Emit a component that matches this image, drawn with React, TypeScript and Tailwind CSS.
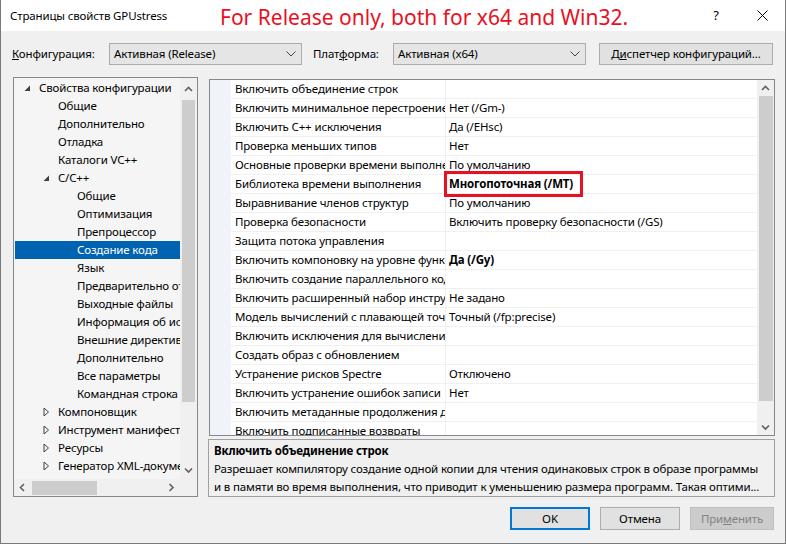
import React from "react";

const font = "font-['Segoe_UI','Noto_Sans',sans-serif]";

function Chevron({ dir, className }: { dir: "up" | "down" | "left" | "right"; className?: string }) {
  const d =
    dir === "up"
      ? "M1 5 L4.5 1.5 L8 5"
      : dir === "down"
      ? "M1 1.5 L4.5 5 L8 1.5"
      : dir === "left"
      ? "M5 1 L1.5 4.5 L5 8"
      : "M1.5 1 L5 4.5 L1.5 8";
  const w = dir === "up" || dir === "down" ? 9 : 7;
  const h = dir === "up" || dir === "down" ? 7 : 9;
  return (
    <svg width={w} height={h} viewBox={`0 0 ${w} ${h}`} className={className}>
      <path d={d} fill="none" stroke="#606060" strokeWidth="1.6" />
    </svg>
  );
}

function ComboChevron() {
  return (
    <svg width="10" height="6" viewBox="0 0 10 6">
      <path d="M0.5 0.5 L5 5 L9.5 0.5" fill="none" stroke="#444" strokeWidth="1" />
    </svg>
  );
}

type TreeItem = { t: string; lvl: number; state?: "exp" | "col"; sel?: boolean };

const tree: TreeItem[] = [
  { t: "Свойства конфигурации", lvl: 0, state: "exp" },
  { t: "Общие", lvl: 1 },
  { t: "Дополнительно", lvl: 1 },
  { t: "Отладка", lvl: 1 },
  { t: "Каталоги VC++", lvl: 1 },
  { t: "C/C++", lvl: 1, state: "exp" },
  { t: "Общие", lvl: 2 },
  { t: "Оптимизация", lvl: 2 },
  { t: "Препроцессор", lvl: 2 },
  { t: "Создание кода", lvl: 2, sel: true },
  { t: "Язык", lvl: 2 },
  { t: "Предварительно откомпилированные заголовки", lvl: 2 },
  { t: "Выходные файлы", lvl: 2 },
  { t: "Информация об исходных файлах", lvl: 2 },
  { t: "Внешние директивы include", lvl: 2 },
  { t: "Дополнительно", lvl: 2 },
  { t: "Все параметры", lvl: 2 },
  { t: "Командная строка", lvl: 2 },
  { t: "Компоновщик", lvl: 1, state: "col" },
  { t: "Инструмент манифеста", lvl: 1, state: "col" },
  { t: "Ресурсы", lvl: 1, state: "col" },
  { t: "Генератор XML-документов", lvl: 1, state: "col" },
];

const props: { n: string; v: string; bold?: boolean; boxed?: boolean }[] = [
  { n: "Включить объединение строк", v: "" },
  { n: "Включить минимальное перестроение", v: "Нет (/Gm-)" },
  { n: "Включить C++ исключения", v: "Да (/EHsc)" },
  { n: "Проверка меньших типов", v: "Нет" },
  { n: "Основные проверки времени выполнения", v: "По умолчанию" },
  { n: "Библиотека времени выполнения", v: "Многопоточная (/MT)", bold: true, boxed: true },
  { n: "Выравнивание членов структур", v: "По умолчанию" },
  { n: "Проверка безопасности", v: "Включить проверку безопасности (/GS)" },
  { n: "Защита потока управления", v: "" },
  { n: "Включить компоновку на уровне функций", v: "Да (/Gy)", bold: true },
  { n: "Включить создание параллельного кода", v: "" },
  { n: "Включить расширенный набор инструкций", v: "Не задано" },
  { n: "Модель вычислений с плавающей точкой", v: "Точный (/fp:precise)" },
  { n: "Включить исключения для вычислений с плавающей точкой", v: "" },
  { n: "Создать образ с обновлением", v: "" },
  { n: "Устранение рисков Spectre", v: "Отключено" },
  { n: "Включить устранение ошибок записи", v: "Нет" },
  { n: "Включить метаданные продолжения для EH", v: "" },
  { n: "Включить подписанные возвраты", v: "" },
];

function TreeIcon({ state }: { state?: "exp" | "col" }) {
  if (state === "exp")
    return (
      <svg width="7" height="7" viewBox="0 0 7 7">
        <path d="M6 0.5 L6 6 L0.5 6 Z" fill="#404040" />
      </svg>
    );
  if (state === "col")
    return (
      <svg width="7" height="10" viewBox="0 0 7 10">
        <path d="M1 1 L5.5 5 L1 9 Z" fill="none" stroke="#404040" strokeWidth="1" />
      </svg>
    );
  return null;
}

export default function App() {
  const indent = [25, 44, 63];
  return (
    <div className={`${font} w-[786px] h-[544px] bg-[#f0f0f0] border-x border-b border-[#7a7a7a] flex flex-col text-[11.5px] tracking-[-0.15px] text-black overflow-hidden`}>
      {/* title bar */}
      <div className="h-[31px] bg-white flex items-center shrink-0">
        <span className="ml-[9px] w-[210px] leading-none">Страницы свойств GPUstress</span>
        <span className="text-[21px] tracking-normal leading-none text-[#e81123] mt-[4px]">For Release only, both for x64 and Win32.</span>
        <div className="ml-auto flex h-full">
          <div className="w-[46px] h-full flex items-center justify-center text-[13px]">?</div>
          <div className="w-[46px] h-full flex items-center justify-center">
            <svg width="11" height="11" viewBox="0 0 11 11">
              <path d="M0.5 0.5 L10.5 10.5 M10.5 0.5 L0.5 10.5" stroke="#000" strokeWidth="1" />
            </svg>
          </div>
        </div>
      </div>

      {/* config row */}
      <div className="flex items-center mt-[12px] h-[22px] pl-[11px]">
        <span className="w-[97px]">
          <span className="underline">К</span>онфигурация:
        </span>
        <div className="w-[193px] h-[22px] bg-[#e5e5e5] border border-[#acacac] flex items-center pl-[4px] pr-[5px]">
          <span className="flex-1">Активная (Release)</span>
          <ComboChevron />
        </div>
        <span className="ml-[11px] w-[80px]">
          Плат<span className="underline">ф</span>орма:
        </span>
        <div className="w-[193px] h-[22px] bg-[#e5e5e5] border border-[#acacac] flex items-center pl-[4px] pr-[5px]">
          <span className="flex-1">Активная (x64)</span>
          <ComboChevron />
        </div>
        <div className="ml-[13px] w-[174px] h-[22px] bg-[#e1e1e1] border border-[#adadad] flex items-center justify-center">
          Д<span className="underline">и</span>спетчер конфигураций...
        </div>
      </div>

      {/* main */}
      <div className="flex mt-[12px] pl-[12px] gap-[10px]">
        {/* tree */}
        <div className="w-[185px] h-[420px] border border-[#828790] bg-[#f5f5f5] flex flex-col">
          <div className="flex flex-1 min-h-0">
            <div className="w-[166px] pt-[1px] overflow-hidden">
              {tree.map((it, i) => (
                <div
                  key={i}
                  className={`h-[18px] relative flex items-center whitespace-nowrap ${it.sel ? "bg-[#0063b1] text-white ml-[1px]" : ""}`}
                  style={{ paddingLeft: it.sel ? indent[it.lvl] - 1 : indent[it.lvl] }}
                >
                  {it.state && (
                    <span
                      className="absolute top-0 h-[18px] flex items-center"
                      style={{ left: indent[it.lvl] - 15 }}
                    >
                      <TreeIcon state={it.state} />
                    </span>
                  )}
                  {it.t}
                </div>
              ))}
            </div>
            <div className="w-[17px] bg-[#f0f0f0] flex flex-col items-center">
              <div className="h-[22px] flex items-center">
                <Chevron dir="up" />
              </div>
              <div className="w-[13px] h-[302px] bg-[#cdcdcd]" />
              <div className="flex-1" />
              <div className="h-[17px] flex items-center">
                <Chevron dir="down" />
              </div>
            </div>
          </div>
          <div className="h-[17px] bg-[#f0f0f0] flex items-center shrink-0">
            <div className="w-[17px] flex justify-center">
              <Chevron dir="left" />
            </div>
            <div className="w-[65px] h-[14px] bg-[#cdcdcd] ml-[1px]" />
            <div className="flex-1" />
            <div className="w-[17px] flex justify-center mr-[17px]">
              <Chevron dir="right" />
            </div>
          </div>
        </div>

        {/* right column */}
        <div className="w-[567px] flex flex-col">
          <div className="ml-[1px] mt-[2px] w-[566px] h-[357px] border border-[#828790] bg-white flex overflow-hidden">
            <div className="w-[21px] bg-[#f0f4fa] shrink-0" />
            <div className="w-[526px] overflow-hidden">
              {props.map((p, i) => (
                <div key={i} className="h-[19px] flex border-b border-[#f0f0f0]">
                  <div className="w-[215px] shrink-0 pl-[4px] overflow-hidden whitespace-nowrap border-r border-[#f0f0f0] leading-[18px]">
                    {p.n}
                  </div>
                  <div className={`flex-1 pl-[3px] whitespace-nowrap leading-[18px] relative ${p.bold ? "font-bold" : ""}`}>
                    {p.v}
                    {p.boxed && (
                      <div className="absolute left-[-2px] top-[-4px] w-[139px] h-[26px] border-[3px] border-[#e81123]" />
                    )}
                  </div>
                </div>
              ))}
            </div>
            <div className="w-[17px] bg-[#f0f0f0] flex flex-col items-center shrink-0">
              <div className="h-[16px] flex items-center">
                <Chevron dir="up" />
              </div>
              <div className="w-[14px] h-[305px] bg-[#cdcdcd]" />
              <div className="flex-1" />
              <div className="h-[16px] flex items-center">
                <Chevron dir="down" />
              </div>
            </div>
          </div>
          <div className="mt-[3px] h-[58px] border border-[#a0a0a0] px-[5px] pt-[2px] leading-[18px] overflow-hidden">
            <div className="font-bold">Включить объединение строк</div>
            <div className="whitespace-nowrap">Разрешает компилятору создание одной копии для чтения одинаковых строк в образе программы</div>
            <div className="whitespace-nowrap">и в памяти во время выполнения, что приводит к уменьшению размера программ. Такая оптими...</div>
          </div>
        </div>
      </div>

      {/* buttons */}
      <div className="flex justify-end gap-[10px] mt-[10px] pr-[11px]">
        <div className="w-[80px] h-[23px] bg-[#e1e1e1] border-2 border-[#0078d7] flex items-center justify-center">OK</div>
        <div className="w-[80px] h-[23px] bg-[#e1e1e1] border border-[#adadad] flex items-center justify-center">Отмена</div>
        <div className="w-[84px] h-[23px] bg-[#cccccc] border border-[#bfbfbf] flex items-center justify-center text-[#838383]">
          При<span className="underline">м</span>енить
        </div>
      </div>
    </div>
  );
}
